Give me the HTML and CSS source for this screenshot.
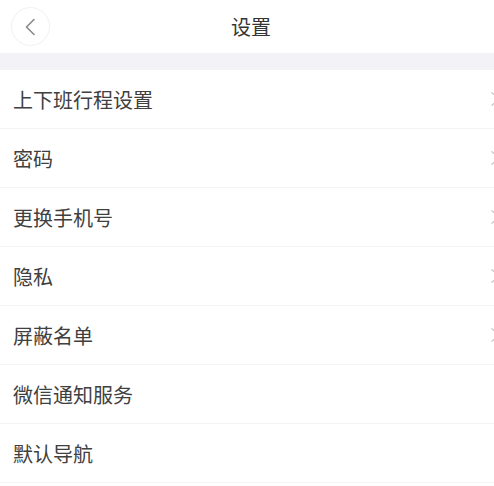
FILE: index.html
```html
<!DOCTYPE html>
<html lang="zh-CN">
<head>
    <meta charset="UTF-8">
    <meta name="viewport" content="width=device-width, initial-scale=1.0">
    <title>设置</title>
    <link rel="stylesheet" href="styles.css">
</head>
<body>
    <header class="top-bar">
        <button class="back-btn" aria-label="返回">
            <svg width="12" height="18" viewBox="0 0 12 18"><path d="M10 1.5 L2.5 9 L10 16.5" fill="none" stroke="#8a8a8a" stroke-width="1.6" stroke-linecap="round" stroke-linejoin="round"/></svg>
        </button>
        <h1 class="title">设置</h1>
    </header>
    <div class="spacer"></div>
    <ul class="menu">
        <li class="menu-item has-arrow">上下班行程设置</li>
        <li class="menu-item has-arrow">密码</li>
        <li class="menu-item has-arrow">更换手机号</li>
        <li class="menu-item has-arrow">隐私</li>
        <li class="menu-item has-arrow">屏蔽名单</li>
        <li class="menu-item">微信通知服务</li>
        <li class="menu-item">默认导航</li>
    </ul>
</body>
</html>
```

FILE: styles.css
```css
:root {
    --text-dark: #404040;
    --text-title: #353535;
    --band: #f3f3f7;
    --line: #f4f4f6;
    --arrow: #b8b8b8;
}

html, body {
    margin: 0;
    padding: 0;
    background: #ffffff;
}

body {
    font-family: "Noto Sans CJK SC", "Noto Sans", sans-serif;
    width: 494px;
    overflow: hidden;
}

.top-bar {
    height: 53px;
    display: flex;
    align-items: center;
    justify-content: center;
    padding-left: 8px;
    box-sizing: border-box;
    position: relative;
}

.back-btn {
    position: absolute;
    left: 11px;
    top: 7px;
    width: 39px;
    height: 39px;
    border-radius: 50%;
    border: 1px solid #f1f1f3;
    background: #fff;
    display: flex;
    align-items: center;
    justify-content: center;
    padding: 0 2px 0 0;
}

.title {
    margin: 0;
    font-size: 20px;
    font-weight: 400;
    color: var(--text-title);
}

.spacer {
    height: 17px;
    background: var(--band);
}

.menu {
    list-style: none;
    margin: 0;
    padding: 0;
}

.menu-item {
    height: 58px;
    border-bottom: 1px solid var(--line);
    display: flex;
    align-items: center;
    padding-left: 13px;
    font-size: 20px;
    color: var(--text-dark);
    position: relative;
}

.has-arrow::after {
    content: "";
    position: absolute;
    right: -3px;
    top: 50%;
    width: 9px;
    height: 9px;
    border-top: 1.5px solid var(--arrow);
    border-right: 1.5px solid var(--arrow);
    transform: translateY(-50%) rotate(45deg);
}
```
